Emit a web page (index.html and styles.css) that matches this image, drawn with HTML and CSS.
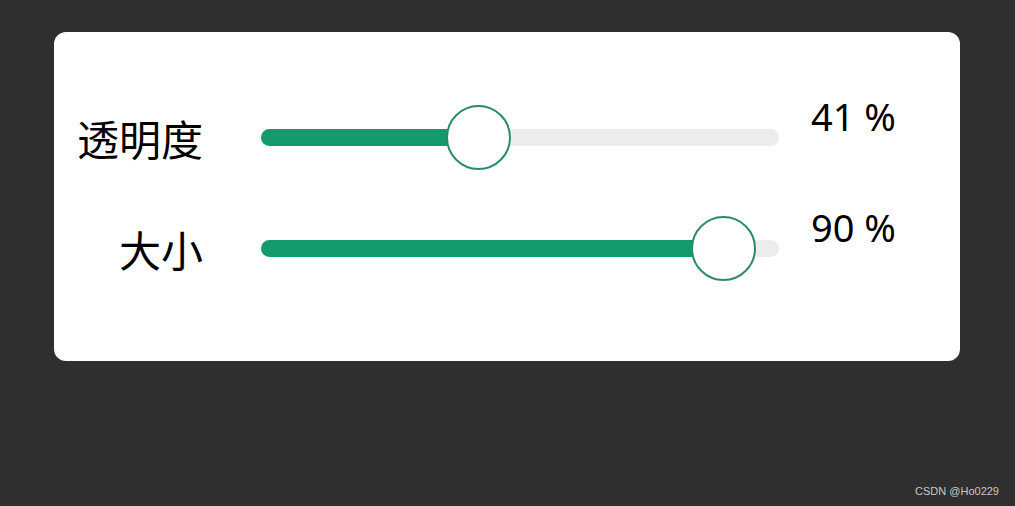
FILE: index.html
```html
<!DOCTYPE html>
<html lang="zh">

<head>
    <meta charset="UTF-8">
    <meta name="viewport" content="width=device-width, initial-scale=1.0">
    <title>滑块设置</title>
    <link rel="stylesheet" href="styles.css">
</head>

<body>
    <div class="panel">
        <div class="row">
            <div class="label">透明度</div>
            <div class="slider">
                <div class="track">
                    <div class="fill" style="width: 41.9%;"></div>
                </div>
                <div class="thumb" style="left: 41.9%;"></div>
            </div>
            <div class="value">41 %</div>
        </div>

        <div class="row">
            <div class="label">大小</div>
            <div class="slider">
                <div class="track">
                    <div class="fill" style="width: 89.2%;"></div>
                </div>
                <div class="thumb" style="left: 89.2%;"></div>
            </div>
            <div class="value">90 %</div>
        </div>
    </div>

    <div class="watermark">CSDN @Ho0229</div>
</body>

</html>
```

FILE: styles.css
```css
body {
    margin: 0;
    background-color: #2f2f2f;
    font-family: "Noto Sans", "Noto Sans CJK SC", sans-serif;
    height: 506px;
    overflow: hidden;
}

.panel {
    box-sizing: border-box;
    margin: 32px 0 0 54px;
    width: 906px;
    height: 329px;
    padding-top: 73px;
    background-color: #ffffff;
    border-radius: 12px;
    display: flex;
    flex-direction: column;
    gap: 47px;
}

.row {
    display: flex;
    align-items: center;
    height: 64px;
}

.label {
    width: 149px;
    text-align: right;
    font-family: "Noto Sans CJK SC", sans-serif;
    font-size: 42px;
    line-height: 42px;
    color: #000000;
    margin-top: 1px;
}

.slider {
    position: relative;
    width: 518px;
    height: 64px;
    margin-left: 58px;
    display: flex;
    align-items: center;
}

.track {
    width: 100%;
    height: 17px;
    border-radius: 9px;
    background-color: #ececec;
    overflow: hidden;
}

.fill {
    height: 100%;
    background-color: #139a6d;
}

.thumb {
    position: absolute;
    top: 0;
    box-sizing: border-box;
    width: 65px;
    height: 65px;
    margin-left: -32px;
    border: 2px solid #2b8a69;
    border-radius: 50%;
    background-color: #ffffff;
}

.value {
    margin-left: 32px;
    align-self: flex-start;
    margin-top: -9px;
    font-size: 38px;
    line-height: 40px;
    color: #000000;
}

.watermark {
    position: absolute;
    right: 16px;
    bottom: 9px;
    font-family: "Liberation Sans", sans-serif;
    font-size: 11px;
    color: #c8c8c8;
}
```
